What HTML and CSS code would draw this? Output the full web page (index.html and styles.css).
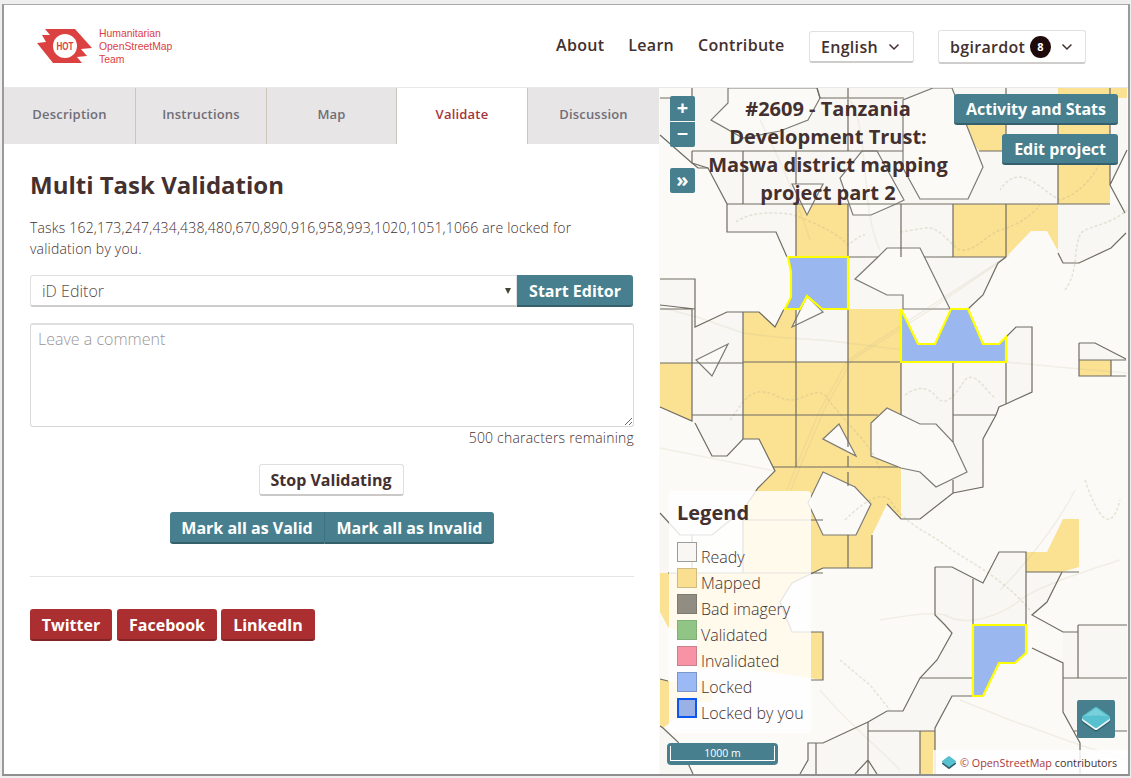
FILE: index.html
```html
<!DOCTYPE html>
<html lang="en">
<head>
<meta charset="utf-8">
<title>Multi Task Validation</title>
<link rel="stylesheet" href="styles.css">
</head>
<body>
<div class="window">
  <header class="topbar">
    <div class="brand">
      <svg class="logo" viewBox="37 29 55 34" width="55" height="34">
        <polygon class="logo-body" points="45,29 50,35 42,35 46,42 37,43 53,63 82,63 77,57 87,56 81,49 92,48 75,29"/>
        <circle class="logo-hole" cx="65" cy="46" r="12"/>
        <text class="logo-text" x="65" y="50" text-anchor="middle" textLength="17" lengthAdjust="spacingAndGlyphs">HOT</text>
      </svg>
      <div class="brand-name">Humanitarian<br>OpenStreetMap<br>Team</div>
    </div>
    <nav class="nav">
      <a class="nav-link">About</a>
      <a class="nav-link">Learn</a>
      <a class="nav-link">Contribute</a>
    </nav>
    <button class="drop lang">English
      <svg class="chev" viewBox="0 0 12 8" width="12" height="8"><path d="M1.5 1.5 6 6l4.5-4.5"/></svg>
    </button>
    <button class="drop user">bgirardot <span class="badge">8</span>
      <svg class="chev" viewBox="0 0 12 8" width="12" height="8"><path d="M1.5 1.5 6 6l4.5-4.5"/></svg>
    </button>
  </header>

  <main class="workspace">
    <section class="panel">
      <div class="tabs">
        <a class="tab">Description</a>
        <a class="tab">Instructions</a>
        <a class="tab">Map</a>
        <a class="tab active">Validate</a>
        <a class="tab last">Discussion</a>
      </div>
      <div class="content">
        <h2 class="title">Multi Task Validation</h2>
        <p class="tasks">Tasks 162,173,247,434,438,480,670,890,916,958,993,1020,1051,1066 are locked for validation by you.</p>
        <div class="editor-row">
          <select class="editor-select"><option>iD Editor</option></select>
          <button class="btn teal start">Start Editor</button>
        </div>
        <textarea class="comment" placeholder="Leave a comment"></textarea>
        <div class="remaining">500 characters remaining</div>
        <div class="center"><button class="btn plain">Stop Validating</button></div>
        <div class="center group">
          <button class="btn teal left">Mark all as Valid</button><button class="btn teal right">Mark all as Invalid</button>
        </div>
        <hr class="rule">
        <div class="social">
          <button class="btn red">Twitter</button>
          <button class="btn red">Facebook</button>
          <button class="btn red">LinkedIn</button>
        </div>
      </div>
    </section>

    <section class="map">
      <svg class="map-art" viewBox="659 88 469 686" width="469" height="686">
        <rect class="ground" x="659" y="88" width="469" height="686"/>
        <g class="ready">
          <polygon points="660,98 692,98 692,88 903,88 903,204 727,204 708,168 698,168 692,163 660,135"/>
          <polygon points="903,88 1058,88 1058,204 903,204"/>
          <polygon points="1110,98 1127,98 1127,150 1110,185"/>
          <polygon points="1058,204 1127,204 1127,233 1111,248 1079,263 1063,263 1058,253"/>
          <polygon points="727,204 796,204 796,257 787,257 776,232 727,232"/>
          <polygon points="848,204 953,204 953,257 1006,257 998,263 983,295 968,309 848,309"/>
          <polygon points="660,279 695,279 695,309 660,305"/>
          <polygon points="660,309 692,309 692,363 660,363"/>
          <polygon points="692,309 695,309 695,327 727,312 743,312 743,439 727,456 712,456 695,423 692,421"/>
          <polygon points="796,309 848,309 848,362 796,362"/>
          <polygon points="901,362 1006,362 1006,404 999,407 996,415 983,439 983,487 953,493 920,519 902,519 901,468"/>
          <polygon points="1006,337 1016,327 1032,327 1032,392 1006,404"/>
          <polygon points="1079,343 1095,343 1126,359 1079,359"/>
          <polygon points="660,513 680,535 712,535 745,512 745,573 660,573"/>
          <polygon points="935,567 952,567 983,583 999,552 1026,552 1026,625 945,625 935,615"/>
          <polygon points="1026,572 1062,572 1047,602 1032,615 1026,620"/>
          <polygon points="945,625 973,625 973,678 920,678 937,660 952,633"/>
          <polygon points="920,678 973,678 973,696 952,696 935,728 935,731 868,731 868,722 887,711 903,711"/>
          <polygon points="816,743 823,743 868,722 868,731 935,731 935,774 816,774"/>
          <polygon points="808,743 816,743 816,774 800,774 808,760"/>
          <polygon points="1063,632 1078,632 1078,625 1127,625 1127,678 1063,678"/>
          <polygon points="1063,678 1127,678 1127,731 1074,731 1063,712"/>
          <polygon points="660,726 663,728 678,742 693,774 660,774"/>
        </g>
        <g class="mapped">
          <polygon points="1058,88 1110,88 1110,204 1058,204"/>
          <polygon points="1110,88 1127,88 1127,98 1110,98"/>
          <polygon points="967,125 967,135 979,151 1006,151 1006,125"/>
          <polygon points="953,204 1006,204 1006,257 953,257"/>
          <polygon points="1006,204 1058,204 1058,251 1047,231 1031,231 1006,257"/>
          <polygon points="796,204 848,204 848,257 796,257"/>
          <polygon points="1079,360 1111,360 1111,376 1079,376"/>
          <polygon points="660,363 692,363 692,421 660,407"/>
          <polygon points="743,312 759,312 775,327 784,309 796,309 796,362 848,362 848,309 901,309 901,519 887,504 872,535 872,568 823,568 792,583 780,602 792,632 823,632 823,680 723,665 697,670 697,640 668,627 660,612 660,573 743,573 743,512 758,488 775,471 759,439 743,439"/>
          <polygon points="660,679 668,681 712,680 712,702 697,702 663,728 660,726"/>
          <polygon points="1026,552 1047,552 1063,519 1079,519 1079,567 1062,572 1026,572"/>
          <polygon points="920,731 935,731 935,774 920,774"/>
        </g>
        <g class="hole">
          <polygon points="728,88 728,103 711,120 743,138 780,131 808,120 820,98 817,88"/>
          <polygon points="933,88 952,88 983,167 968,199 920,199 903,168 903,100"/>
          <polygon points="862,151 877,151 904,200 896,204 871,215 853,215 840,178"/>
          <polygon points="792,184 823,184 807,215"/>
          <polygon points="855,279 878,257 887,248 920,248 950,309 903,309 903,295 887,295"/>
          <polygon points="792,327 807,296 823,312"/>
          <polygon points="696,360 728,344 712,376"/>
          <polygon points="823,439 839,424 856,456"/>
          <polygon points="871,423 887,408 920,424 936,424 953,442 967,472 936,487 920,472 901,468 871,456"/>
          <polygon points="823,472 855,487 871,504 856,535 823,535 808,503"/>
        </g>
        <g class="road">
          <path d="M660 307 700 318 743 333C790 340 820 338 847 343 900 350 930 352 960 357 1020 364 1070 368 1127 373"/>
          <path d="M1006 257 925 310 848 360 820 410 796 467 787 490"/>
          <path d="M1010 255 930 310 852 360 824 410 800 467 791 490"/>
          <path d="M660 448 775 471"/>
          <path d="M1000 590C1030 560 1060 520 1075 490M960 700 1010 720 1080 745 1127 760"/>
          <path d="M820 690C845 720 870 740 900 770"/>
          <path d="M880 620C910 615 930 612 945 615 970 630 1010 610 1020 600 1040 585 1090 570 1120 560"/>
          <path d="M760 120C775 150 790 180 810 240"/>
          <path d="M850 100C870 130 860 210 880 250"/>
        </g>
        <g class="trail">
          <path d="M736 222C750 212 770 212 790 214 815 222 840 235 848 245 855 240 860 235 865 235"/>
          <path d="M900 232 925 228C940 226 950 245 960 250 975 252 985 236 1000 230 1020 225 1035 212 1040 205"/>
          <path d="M1065 290C1080 270 1072 245 1082 232 1095 224 1110 225 1127 210"/>
          <path d="M730 420C745 400 750 385 775 395 800 410 810 385 825 395 850 430 870 440 880 470"/>
          <path d="M905 395C915 388 925 385 935 395 945 410 955 395 965 380 975 370 985 390 995 398"/>
          <path d="M845 520C860 505 880 490 890 500 905 525 925 530 945 545 965 560 1000 575 1030 610"/>
          <path d="M1110 130C1105 160 1090 190 1060 200 1040 190 1020 160 1000 190"/>
          <path d="M1085 480C1095 510 1110 540 1120 500"/>
          <path d="M840 660 870 685 890 710"/>
        </g>
        <g class="outline">
          <path d="M660 98H692V88M817 88 820 98H904M848 88V98M1006 88V151H979M1058 99V204M1110 88V185M1127 150 1110 185 1125 213"/>
          <path d="M692 151H903M692 151V163L708 168M743 151V204M796 151V184M796 204V257M848 204V257M901 204V257M727 204H1110M848 99V151M953 204V257M1006 204V257"/>
          <path d="M848 257H878M924 257H1006"/>
          <path d="M660 135 692 163 698 168 708 168 727 204 727 232 776 232 787 257"/>
          <path d="M1058 253 1063 263 1079 263 1111 248 1126 233M1006 257 998 263 983 295 968 309"/>
          <path d="M660 279H695V327L727 312H759L775 327 784 309M660 309H692V421L660 407M660 305 695 309"/>
          <path d="M743 312V439M796 309V362M848 309V447M848 456V467M901 309V415M660 363H743M743 362H901M692 415H878"/>
          <path d="M695 423 712 456 727 456 743 439 759 439 775 471 758 488 743 510 712 535 680 535 660 513"/>
          <path d="M796 362V467M773 467H898M848 472V486M848 535V568M823 568H872V535M887 504 901 519 920 519 953 493 983 487V439L996 415 999 407 1006 404 1032 392V327H1016L1006 337V404M953 362V442M953 480V493M953 415H996"/>
          <path d="M692 535V573M743 520V573M743 520H823M668 573H823"/>
          <path d="M823 568 792 583 780 602 792 632 823 632 823 680 811 680"/>
          <path d="M1079 343H1095L1126 359M1079 343V376H1126M1079 360H1126M1111 360V376"/>
          <path d="M935 567H952L983 583 999 552H1026V625M935 567V615L945 625 952 633 937 660 920 678 903 711 887 711 868 722 823 743H808V760L800 774M816 743V774M973 579V625"/>
          <path d="M920 678H973M1026 572H1079M1062 572 1047 602 1032 615 1063 632H1078M1078 625H1127M1078 625V678M1063 678H1127M1032 648 1063 663V712L1080 743V774M1074 731H1127"/>
          <path d="M973 696H952L935 728V774M868 731H935M920 731V774M868 722V774M855 774 868 760 877 774"/>
          <path d="M663 728 678 742 693 774M660 679 668 681M660 726 663 728"/>
        </g>
        <g class="locked">
          <polygon points="788,257 848,257 848,309 822,309 807,296 800,309 785,309 791,297 791,272"/>
          <polygon points="901,309 918,344 935,344 951,309 968,309 983,344 999,344 1006,337 1006,362 901,362"/>
          <polygon points="973,625 1026,625 1026,653 1015,663 999,663 983,696 973,696"/>
        </g>
      </svg>

      <div class="zoom">
        <a class="ctl plus">+</a>
        <a class="ctl minus">−</a>
      </div>
      <a class="ctl more">»</a>
      <h3 class="map-title">#2609 - Tanzania Development Trust: Maswa district mapping project part 2</h3>
      <div class="map-actions">
        <button class="btn teal">Activity and Stats</button>
        <button class="btn teal">Edit project</button>
      </div>

      <aside class="legend">
        <h4 class="legend-title">Legend</h4>
        <div class="legend-row"><i class="sw s-ready"></i><span>Ready</span></div>
        <div class="legend-row"><i class="sw s-mapped"></i><span>Mapped</span></div>
        <div class="legend-row"><i class="sw s-bad"></i><span>Bad imagery</span></div>
        <div class="legend-row"><i class="sw s-valid"></i><span>Validated</span></div>
        <div class="legend-row"><i class="sw s-invalid"></i><span>Invalidated</span></div>
        <div class="legend-row"><i class="sw s-locked"></i><span>Locked</span></div>
        <div class="legend-row"><i class="sw s-you"></i><span>Locked by you</span></div>
      </aside>

      <div class="scale"><span class="scale-box">1000 m</span></div>

      <a class="layers">
        <svg viewBox="0 0 38 38" width="38" height="38">
          <polygon class="dia-dark" points="19,12.500 31,21 19,29.500 7,21"/>
          <polygon class="dia-light" points="19,11 31,19.500 19,28 7,19.500"/>
          <polygon class="dia-top" points="19,9 31,17.500 19,26 7,17.500"/>
          <path class="dia-shine" d="M19 8 7 16.500C12 15.500 24 15 30.500 16.500Z"/>
        </svg>
      </a>

      <div class="attribution">
        <svg class="attr-icon" viewBox="0 0 16 16" width="16" height="16">
          <polygon class="dia-dark small" points="8,5 14,9.500 8,14 2,9.500"/>
          <polygon class="dia-top small" points="8,3 14,7.500 8,12 2,7.500"/>
        </svg>
        <span class="attr-text"><span class="osm">© OpenStreetMap</span> contributors</span>
      </div>
    </section>
  </main>
</div>
</body>
</html>
```
FILE: styles.css
```css
* { box-sizing: border-box; }
html, body { margin: 0; height: 778px; overflow: hidden; }
body {
  background: #efefef;
  padding: 4px 1px 2px 2px;
  font-family: "Open Sans", "Noto Sans", sans-serif;
  font-weight: 300;
  color: #43302f;
}
.window {
  height: 100%;
  display: flex;
  flex-direction: column;
  background: #fff;
  border-top: 1px solid #a9a9a9;
  border-left: 2px solid #9a9a9a;
  border-right: 2px solid #9a9a9a;
  border-bottom: 2px solid #8f8f8f;
}

/* Header */
.topbar {
  height: 83px;
  flex: none;
  display: flex;
  align-items: flex-start;
  padding-top: 24px;
  background: #fff;
  border-bottom: 1px solid #e8e8e8;
}
.brand { display: flex; margin-left: 33px; width: 519px; }
.logo { display: block; flex: none; }
.logo-body { fill: #dc4142; }
.logo-hole { fill: #fff; }
.logo-text { fill: #dc4142; font: 700 10px "Liberation Sans", sans-serif; }
.brand-name {
  margin: -2px 0 0 7px;
  font: 400 10.4px/13px "Liberation Sans", Arial, sans-serif;
  color: #dc4142;
}
.nav { display: flex; gap: 24px; margin-top: 3px; width: 253px; }
.nav-link { font-size: 16px; font-weight: 600; line-height: 26px; letter-spacing: .3px; color: #43302f; }
.drop {
  display: flex;
  align-items: center;
  font: 600 16px "Open Sans", sans-serif;
  letter-spacing: .3px;
  color: #43302f;
  background: #fff;
  border: 1px solid #e2e0e0;
  border-bottom: 2px solid #cfcccc;
  border-radius: 3px;
  padding: 0 12px 0 11px;
}
.lang { width: 105px; height: 32px; margin-top: 2px; gap: 10px; }
.user { width: 148px; height: 34px; margin: 1px 0 0 24px; }
.badge {
  width: 21px;
  height: 22px;
  margin: 0 10px 0 5px;
  border-radius: 50%;
  background: #1e0a0a;
  color: #fff;
  font-size: 11px;
  font-weight: 700;
  line-height: 22px;
  text-align: center;
}
.chev { fill: none; stroke: #43302f; stroke-width: 1.5; }

/* Workspace */
.workspace { flex: 1; min-height: 0; display: flex; }
.panel { width: 655px; flex: none; background: #fff; }
.tabs { display: flex; height: 56px; }
.tab {
  width: 131px;
  display: flex;
  align-items: center;
  justify-content: center;
  padding-bottom: 4px;
  background: #e7e5e5;
  border-right: 1px solid #c9c7ba;
  font-size: 13px;
  font-weight: 600;
  letter-spacing: .2px;
  color: #6f6e78;
}
.tab:first-child { width: 132px; }
.tab:nth-child(3) { width: 130px; }
.tab.active { background: #fff; color: #a6353a; }
.tab.last { border-right: 0; }
.content { padding: 25px 25px 0 26px; }
.title { margin: 0; font-size: 24px; font-weight: 700; line-height: 32px; color: #43302f; }
.tasks { margin: 16px 0 0; font-size: 14px; line-height: 21px; letter-spacing: .18px; }

.btn {
  font: 700 16px/1 "Open Sans", sans-serif;
  border-radius: 3px;
  height: 32px;
  padding: 0 12px;
  cursor: pointer;
}
.teal { background: #477f8e; color: #fff; border: 0; border-bottom: 2px solid #345f6b; }
.red { background: #ab2f31; color: #fff; border: 0; border-bottom: 2px solid #832527; }
.plain { background: #fff; color: #43302f; border: 1px solid #e0dede; border-bottom: 2px solid #cbc8c8; }

.editor-row { display: flex; width: 603px; margin-top: 16px; }
.editor-select {
  flex: 1;
  height: 32px;
  appearance: none;
  background: #fff url("data:image/svg+xml,%3Csvg xmlns='http://www.w3.org/2000/svg' width='6' height='6'%3E%3Cpath d='M0 0h6L3 6z' fill='%23443'/%3E%3C/svg%3E") no-repeat right 5px center;
  border: 1px solid #e0dede;
  border-bottom: 2px solid #cfcccc;
  border-radius: 3px 0 0 3px;
  padding-left: 11px;
  font: 300 16px "Open Sans", sans-serif;
  color: #5a4d4c;
}
.start { width: 116px; border-radius: 0 3px 3px 0; padding: 2px 0 0; }
.comment {
  display: block;
  width: 604px;
  height: 104px;
  margin-top: 16px;
  padding: 2px 7px;
  border: 1px solid #d9d7d7;
  border-top: 2px solid #e0dede;
  border-radius: 3px;
  font: 300 16px/24px "Open Sans", sans-serif;
}
.comment::placeholder { color: #9b9696; opacity: 1; }
.remaining { width: 604px; text-align: right; font-size: 14px; line-height: 22px; letter-spacing: .2px; }
.center { display: flex; justify-content: center; width: 604px; }
.remaining + .center { margin-top: 15px; }
.plain { width: 145px; padding: 0; margin-right: 2px; }
.group { margin-top: 16px; }
.left { width: 155px; padding: 2px 0 0; border-radius: 3px 0 0 3px; border-right: 1px solid #3f7180; }
.right { width: 169px; padding: 2px 0 0; border-radius: 0 3px 3px 0; }
.rule { width: 604px; margin: 32px 0 0; border: 0; border-top: 1px solid #e4e4e4; }
.social { display: flex; margin-top: 32px; }
.social .red { padding: 2px 0 0; }
.social .red:nth-child(1) { width: 82px; margin-right: 5px; }
.social .red:nth-child(2) { width: 100px; margin-right: 4px; }
.social .red:nth-child(3) { width: 94px; }

/* Map */
.map { position: relative; flex: 1; min-width: 0; overflow: hidden; }
.map-art { position: absolute; left: 0; top: 0; display: block; }
.ground { fill: #fbfaf6; }
.ready polygon { fill: #f8f7f3; }
.mapped polygon { fill: #fbe192; }
.hole polygon { fill: #fbfaf6; stroke: #7c7a74; stroke-width: 1.200; }
.road path { fill: none; stroke: #b9b48f; stroke-opacity: .16; stroke-width: 1.500; }
.trail path { fill: none; stroke: #b9b48f; stroke-opacity: .32; stroke-width: 1.500; stroke-dasharray: 3 2; }
.outline path { fill: none; stroke: #6f6c62; stroke-width: 1.200; }
.locked polygon { fill: #9ab7f0; stroke: #ffff00; stroke-width: 2.200; }

.ctl {
  position: absolute;
  left: 11px;
  display: block;
  width: 25px;
  height: 25px;
  background: #477f8e;
  color: #fff;
  font-weight: 700;
  font-size: 20px;
  line-height: 24px;
  text-align: center;
}
.zoom .plus { top: 8px; border-radius: 2px 2px 0 0; }
.zoom .minus { top: 34px; border-radius: 0 0 2px 2px; }
.more { top: 80px; border-radius: 2px; }
.map-title {
  position: absolute;
  left: 44px;
  top: 7px;
  width: 250px;
  margin: 0;
  text-align: center;
  font-size: 20px;
  font-weight: 700;
  line-height: 28px;
  color: #43302f;
}
.map-actions {
  position: absolute;
  top: 6px;
  right: 10px;
  display: flex;
  flex-direction: column;
  align-items: flex-end;
  gap: 9px;
}
.map-actions .btn { height: 31px; }

.legend {
  position: absolute;
  left: 10px;
  top: 403px;
  width: 142px;
  height: 242px;
  padding: 8px;
  border-radius: 4px;
  background: rgba(255, 255, 255, .82);
}
.legend-title { margin: 0 0 16px; font-size: 20px; font-weight: 700; line-height: 28px; color: #43302f; }
.legend-row { display: flex; height: 26px; font-size: 16px; line-height: 26px; white-space: nowrap; }
.legend-row span { margin: 1px 0 0 4px; }
.sw { display: block; flex: none; width: 20px; height: 20px; margin-top: -1px; border: 1px solid; }
.s-ready { background: #f8f7f4; border-color: #9d9c98; }
.s-mapped { background: #fbdf90; border-color: #cdbb84; }
.s-bad { background: #918d83; border-color: #7b7a72; }
.s-valid { background: #90c586; border-color: #7fae7a; }
.s-invalid { background: #f893a6; border-color: #c97f8d; }
.s-locked { background: #9ab9f5; border-color: #7c96c8; }
.s-you { background: #9ab1e6; border: 2px solid #0f56f0; }

.scale {
  position: absolute;
  left: 8px;
  top: 655px;
  width: 111px;
  height: 22px;
  padding: 3px 3px 0;
  border-radius: 4px;
  background: #477f8e;
}
.scale-box {
  display: block;
  width: 105px;
  height: 15px;
  border: 1px solid #fff;
  border-top: 0;
  color: #fff;
  font-size: 10.500px;
  font-weight: 400;
  line-height: 15px;
  text-align: center;
}
.layers { position: absolute; left: 418px; top: 612px; width: 38px; height: 38px; display: block; background: #477f8e; border-radius: 2px; }
.layers svg { display: block; }
.dia-dark { fill: #2f5f6c; stroke: #2f5f6c; stroke-width: 4; stroke-linejoin: round; }
.dia-light { fill: #f2f7f8; stroke: #f2f7f8; stroke-width: 4; stroke-linejoin: round; }
.dia-top { fill: #57c1cf; stroke: #57c1cf; stroke-width: 4; stroke-linejoin: round; }
.dia-shine { fill: #79d0db; }
.small { stroke-width: 2; }
.attribution {
  position: absolute;
  right: 0;
  bottom: 0;
  width: 195px;
  height: 24px;
  display: flex;
  align-items: center;
  gap: 3px;
  padding-left: 8px;
  background: rgba(255, 255, 255, .82);
}
.attr-icon { flex: none; }
.attr-text { font-size: 10.800px; font-weight: 400; white-space: nowrap; }
.osm { color: #a8383a; }
```
